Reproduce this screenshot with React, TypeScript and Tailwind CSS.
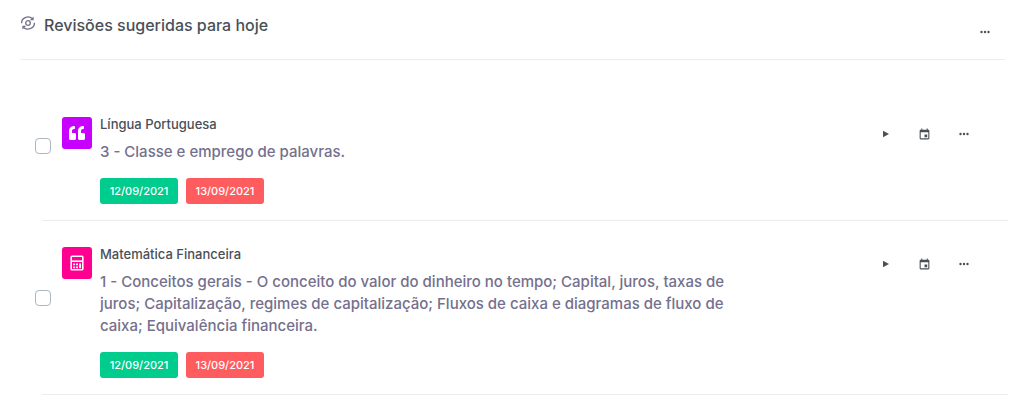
import React from 'react';
import { MdEvent } from 'react-icons/md';
import { FaQuoteLeft } from 'react-icons/fa';

interface Review {
  id: number;
  subject: string;
  topic: string;
  color: string;
  icon: React.ReactNode;
  studiedAt: string;
  dueAt: string;
}

const CalculatorIcon = () => (
  <svg viewBox="0 0 14 16" className="h-4 w-[14px]" fill="none" stroke="currentColor">
    <rect x="1.2" y="1.2" width="11.6" height="13.6" rx=".8" strokeWidth="1.6" />
    <path d="M1 6.2h12" strokeWidth="1.6" />
    <path d="M3.2 9.3h1.9M6.1 9.3H8M3.2 12.3h1.9M6.1 12.3H8" strokeWidth="1.8" />
    <path d="M10.1 8.4v4.8" strokeWidth="1.9" />
  </svg>
);

const ReviewIcon = () => (
  <svg viewBox="0 0 16 16" className="size-4" fill="none" stroke="currentColor" strokeWidth="1.3" aria-hidden="true">
    <circle cx="8" cy="8" r="2.3" />
    <path d="M1.6 8.2A6.4 5.8 0 0 1 12.4 3.6" />
    <path d="M14.4 7.8A6.4 5.8 0 0 1 3.6 12.4" />
    <path d="M13.6 1.4v3.8H9.8z" fill="currentColor" stroke="none" />
    <path d="M2.4 14.6v-3.8h3.8z" fill="currentColor" stroke="none" />
  </svg>
);

const DotsIcon = () => (
  <svg viewBox="0 0 10 4" className="h-1 w-[10px]" fill="currentColor">
    <circle cx="1.5" cy="2" r="1.2" />
    <circle cx="5" cy="2" r="1.2" />
    <circle cx="8.5" cy="2" r="1.2" />
  </svg>
);

const PlayIcon = () => (
  <svg viewBox="0 0 6 8" className="h-2 w-[6px]" fill="currentColor">
    <path d="M0 .8v6.4L6 4z" />
  </svg>
);

const reviews: Review[] = [
  {
    id: 1,
    subject: 'Língua Portuguesa',
    topic: '3 - Classe e emprego de palavras.',
    color: 'bg-[#c800ff]',
    icon: <FaQuoteLeft size={16} />,
    studiedAt: '12/09/2021',
    dueAt: '13/09/2021',
  },
  {
    id: 2,
    subject: 'Matemática Financeira',
    topic:
      '1 - Conceitos gerais - O conceito do valor do dinheiro no tempo; Capital, juros, taxas de juros; Capitalização, regimes de capitalização; Fluxos de caixa e diagramas de fluxo de caixa; Equivalência financeira.',
    color: 'bg-[#ff0090]',
    icon: <CalculatorIcon />,
    studiedAt: '12/09/2021',
    dueAt: '13/09/2021',
  },
];

function IconButton({ label, children }: { label: string; children: React.ReactNode }) {
  return (
    <button type="button" aria-label={label} className="flex h-8 w-[39px] items-center justify-center text-[#495057]">
      {children}
    </button>
  );
}

function ReviewRow({ review }: { review: Review }) {
  const inputId = `review-${review.id}`;

  return (
    <li className="flex border-b border-[#ededee] pt-[26px] pb-4">
      <input
        id={inputId}
        type="checkbox"
        className="-ml-[7px] mb-[30px] size-4 shrink-0 appearance-none self-center rounded border border-[#adb5bd] bg-white checked:bg-[#00cc8e]"
      />
      <div className={`ml-[11px] flex h-8 w-[30px] shrink-0 items-center justify-center rounded-[3px] text-white ${review.color}`}>
        {review.icon}
      </div>
      <div className="ml-2 max-w-[630px] flex-1">
        <label htmlFor={inputId} className="block text-[13px] leading-[14px] font-medium text-[#495057]">
          {review.subject}
        </label>
        <p className="mt-[10px] text-[15px] leading-[22px] font-medium text-[#74708d]">{review.topic}</p>
        <div className="mt-[15px] flex gap-2 text-[11px] font-medium text-white">
          <span className="flex h-[26px] w-[78px] items-center justify-center rounded-[3px] bg-[#00cc8e]">{review.studiedAt}</span>
          <span className="flex h-[26px] w-[78px] items-center justify-center rounded-[3px] bg-[#ff5c60]">{review.dueAt}</span>
        </div>
      </div>
      <div className="mt-px mr-[25px] ml-auto flex shrink-0">
        <IconButton label="Iniciar revisão">
          <PlayIcon />
        </IconButton>
        <IconButton label="Reagendar">
          <MdEvent size={13} />
        </IconButton>
        <IconButton label="Mais opções">
          <DotsIcon />
        </IconButton>
      </div>
    </li>
  );
}

export default function App() {
  return (
    <main className="bg-white pr-[13px] pl-5 font-['Inter',sans-serif]">
      <header className="mr-[3px] flex h-[60px] border-b border-[#ededee]">
        <span className="mt-[15px] text-[#74708d]">
          <ReviewIcon />
        </span>
        <h1 className="mt-3 ml-2 text-base leading-[26px] font-medium text-[#495057]">Revisões sugeridas para hoje</h1>
        <div className="mt-4 mr-px ml-auto">
          <IconButton label="Opções da lista">
            <DotsIcon />
          </IconButton>
        </div>
      </header>
      <ul className="mt-[31px] ml-[22px]">
        {reviews.map(review => (
          <ReviewRow key={review.id} review={review} />
        ))}
      </ul>
    </main>
  );
}
